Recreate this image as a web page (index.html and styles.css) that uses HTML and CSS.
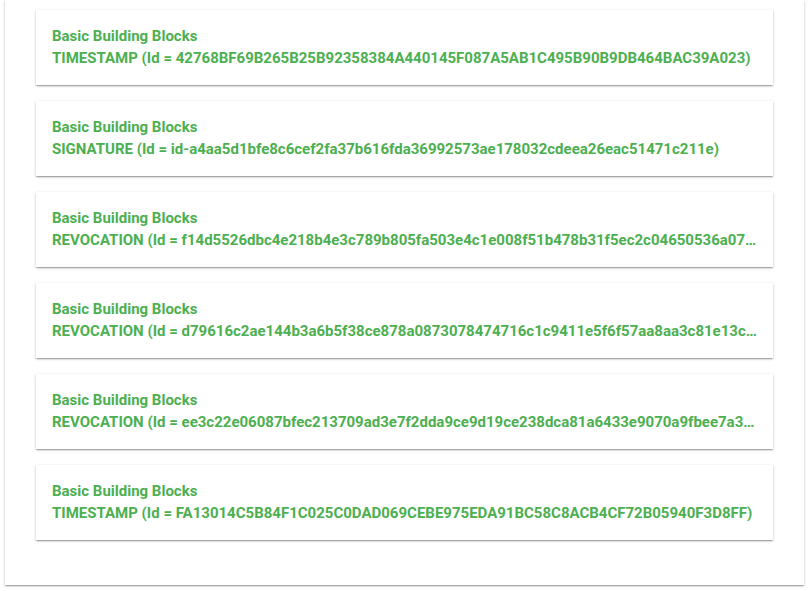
FILE: index.html
```html
<!DOCTYPE html>
<html>
<head>
<meta charset="utf-8">
<link rel="stylesheet" href="styles.css">
</head>
<body>
<div class="panel">
  <div class="card"><div class="title">Basic Building Blocks</div><div class="line">TIMESTAMP (Id = 42768BF69B265B25B92358384A440145F087A5AB1C495B90B9DB464BAC39A023)</div></div>
  <div class="card"><div class="title">Basic Building Blocks</div><div class="line">SIGNATURE (Id = id-a4aa5d1bfe8c6cef2fa37b616fda36992573ae178032cdeea26eac51471c211e)</div></div>
  <div class="card"><div class="title">Basic Building Blocks</div><div class="line">REVOCATION (Id = f14d5526dbc4e218b4e3c789b805fa503e4c1e008f51b478b31f5ec2c04650536a07…</div></div>
  <div class="card"><div class="title">Basic Building Blocks</div><div class="line">REVOCATION (Id = d79616c2ae144b3a6b5f38ce878a0873078474716c1c9411e5f6f57aa8aa3c81e13c…</div></div>
  <div class="card"><div class="title">Basic Building Blocks</div><div class="line">REVOCATION (Id = ee3c22e06087bfec213709ad3e7f2dda9ce9d19ce238dca81a6433e9070a9fbee7a3…</div></div>
  <div class="card"><div class="title">Basic Building Blocks</div><div class="line">TIMESTAMP (Id = FA13014C5B84F1C025C0DAD069CEBE975EDA91BC58C8ACB4CF72B05940F3D8FF)</div></div>
</div>
</body>
</html>
```
FILE: styles.css
```css
html, body {
  margin: 0;
  padding: 0;
  background: #ffffff;
}
body {
  width: 810px;
  height: 591px;
  overflow: hidden;
  font-family: Roboto, "Liberation Sans", sans-serif;
}
.panel {
  margin-left: 5px;
  width: 799px;
  box-sizing: border-box;
  padding: 10px 31px 45px 31px;
  background: #fff;
  display: flex;
  flex-direction: column;
  gap: 16px;
  box-shadow: 0 1px 3px rgba(0,0,0,0.2), 0 1px 1px rgba(0,0,0,0.14), 0 2px 1px -1px rgba(0,0,0,0.12);
}
.card {
  background: #fff;
  height: 75px;
  box-sizing: border-box;
  padding: 15px 16px 0 16px;
  box-shadow: 0 1px 3px rgba(0,0,0,0.2), 0 1px 1px rgba(0,0,0,0.14), 0 2px 1px -1px rgba(0,0,0,0.12);
  color: #4caf50;
  font-size: 15px;
  font-weight: 700;
  line-height: 22px;
}
.title, .line {
  white-space: nowrap;
}
```
